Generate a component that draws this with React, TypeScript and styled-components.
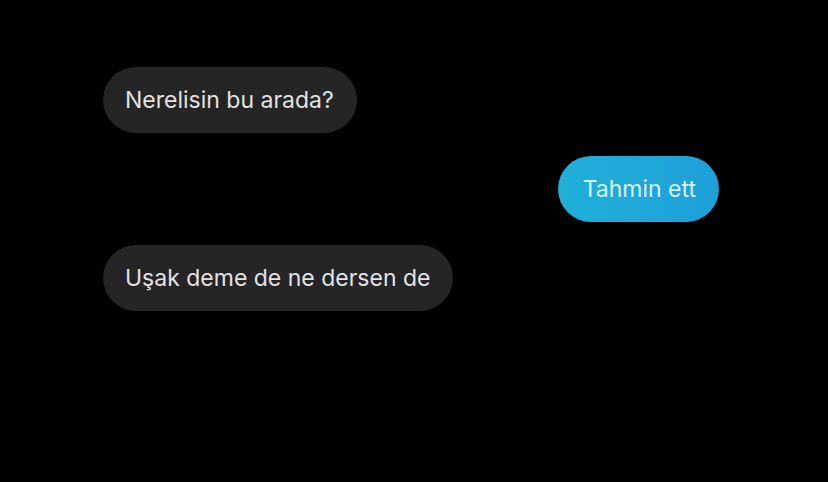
import React from "react";
import styled, { createGlobalStyle } from "styled-components";

const Global = createGlobalStyle`
  html, body { margin: 0; padding: 0; background: #000; }
  body { font-family: Inter, "Liberation Sans", Arial, sans-serif; }
`;

const Screen = styled.div`
  width: 828px;
  height: 482px;
  background: #000;
  box-sizing: border-box;
  padding: 67px 109px 0 103px;
  display: flex;
  flex-direction: column;
  gap: 23px;
`;

const Row = styled.div<{ $mine?: boolean }>`
  display: flex;
  justify-content: ${(p) => (p.$mine ? "flex-end" : "flex-start")};
`;

const Bubble = styled.div<{ $mine?: boolean }>`
  height: 66px;
  box-sizing: border-box;
  padding: ${(p) => (p.$mine ? "0 23px 0 25px" : "0 23px 0 22px")};
  border-radius: 33px;
  display: flex;
  align-items: center;
  font-size: 23px;
  color: ${(p) => (p.$mine ? "#d9f1f9" : "#e2e2e2")};
  background: ${(p) =>
    p.$mine ? "linear-gradient(90deg, #20b0d9 0%, #1e9fd8 100%)" : "#252525"};
`;

const messages = [
  { text: "Nerelisin bu arada?", mine: false },
  { text: "Tahmin ett", mine: true },
  { text: "Uşak deme de ne dersen de", mine: false },
];

export default function App() {
  return (
    <>
      <Global />
      <Screen>
        {messages.map((m, i) => (
          <Row key={i} $mine={m.mine}>
            <Bubble $mine={m.mine}>{m.text}</Bubble>
          </Row>
        ))}
      </Screen>
    </>
  );
}
